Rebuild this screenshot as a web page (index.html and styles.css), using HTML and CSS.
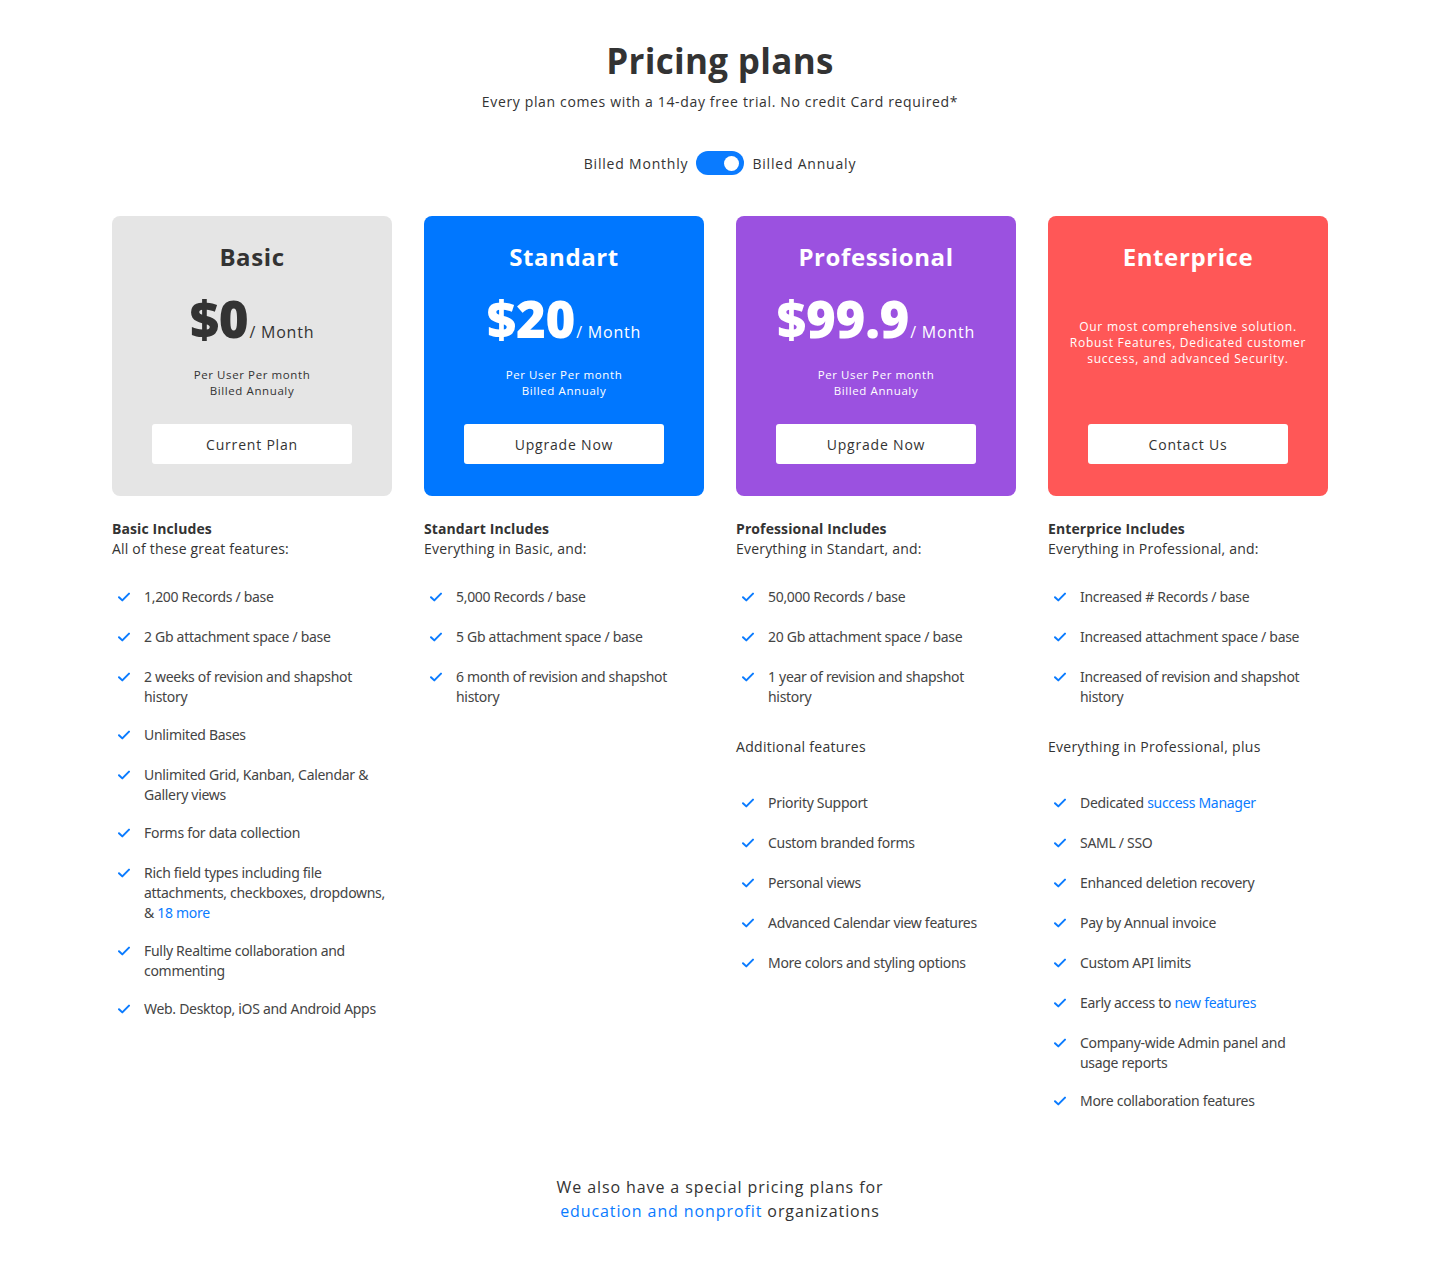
FILE: index.html
```html
<!DOCTYPE html>
<html lang="en">
<head>
<meta charset="utf-8">
<title>Pricing plans</title>
<link rel="stylesheet" href="styles.css">
</head>
<body>
<main class="page">
  <header class="intro">
    <h1 class="title">Pricing plans</h1>
    <p class="subtitle">Every plan comes with a 14-day free trial. No credit Card required*</p>
    <div class="billing">
      <span>Billed Monthly</span>
      <span class="switch"><span class="knob"></span></span>
      <span>Billed Annualy</span>
    </div>
  </header>

  <section class="plans">
    <!-- Basic -->
    <div class="plan">
      <div class="card card-basic">
        <h2 class="card-title">Basic</h2>
        <div class="price"><span class="amount">$0</span><span class="per">/ Month</span></div>
        <p class="note">Per User Per month<br>Billed Annualy</p>
        <button class="btn">Current Plan</button>
      </div>
      <div class="includes">
        <div class="inc-title">Basic Includes</div>
        <div class="inc-sub">All of these great features:</div>
      </div>
      <ul class="features">
        <li><svg class="check" viewBox="0 0 12 10"><path d="M1 5.2 L4.3 8.4 L11 1.6"/></svg><span>1,200 Records / base</span></li>
        <li><svg class="check" viewBox="0 0 12 10"><path d="M1 5.2 L4.3 8.4 L11 1.6"/></svg><span>2 Gb attachment space / base</span></li>
        <li><svg class="check" viewBox="0 0 12 10"><path d="M1 5.2 L4.3 8.4 L11 1.6"/></svg><span>2 weeks of revision and shapshot history</span></li>
        <li><svg class="check" viewBox="0 0 12 10"><path d="M1 5.2 L4.3 8.4 L11 1.6"/></svg><span>Unlimited Bases</span></li>
        <li><svg class="check" viewBox="0 0 12 10"><path d="M1 5.2 L4.3 8.4 L11 1.6"/></svg><span>Unlimited Grid, Kanban, Calendar &amp; Gallery views</span></li>
        <li><svg class="check" viewBox="0 0 12 10"><path d="M1 5.2 L4.3 8.4 L11 1.6"/></svg><span>Forms for data collection</span></li>
        <li><svg class="check" viewBox="0 0 12 10"><path d="M1 5.2 L4.3 8.4 L11 1.6"/></svg><span>Rich field types including file attachments, checkboxes, dropdowns, &amp;&nbsp;<a href="#" class="link">18 more</a></span></li>
        <li><svg class="check" viewBox="0 0 12 10"><path d="M1 5.2 L4.3 8.4 L11 1.6"/></svg><span>Fully Realtime collaboration and commenting</span></li>
        <li><svg class="check" viewBox="0 0 12 10"><path d="M1 5.2 L4.3 8.4 L11 1.6"/></svg><span>Web. Desktop, iOS and Android Apps</span></li>
      </ul>
    </div>

    <!-- Standart -->
    <div class="plan">
      <div class="card card-standart">
        <h2 class="card-title">Standart</h2>
        <div class="price"><span class="amount">$20</span><span class="per">/ Month</span></div>
        <p class="note">Per User Per month<br>Billed Annualy</p>
        <button class="btn">Upgrade Now</button>
      </div>
      <div class="includes">
        <div class="inc-title">Standart Includes</div>
        <div class="inc-sub">Everything in Basic, and:</div>
      </div>
      <ul class="features">
        <li><svg class="check" viewBox="0 0 12 10"><path d="M1 5.2 L4.3 8.4 L11 1.6"/></svg><span>5,000 Records / base</span></li>
        <li><svg class="check" viewBox="0 0 12 10"><path d="M1 5.2 L4.3 8.4 L11 1.6"/></svg><span>5 Gb attachment space / base</span></li>
        <li><svg class="check" viewBox="0 0 12 10"><path d="M1 5.2 L4.3 8.4 L11 1.6"/></svg><span>6 month of revision and shapshot history</span></li>
      </ul>
    </div>

    <!-- Professional -->
    <div class="plan">
      <div class="card card-pro">
        <h2 class="card-title">Professional</h2>
        <div class="price"><span class="amount">$99.9</span><span class="per">/ Month</span></div>
        <p class="note">Per User Per month<br>Billed Annualy</p>
        <button class="btn">Upgrade Now</button>
      </div>
      <div class="includes">
        <div class="inc-title">Professional Includes</div>
        <div class="inc-sub">Everything in Standart, and:</div>
      </div>
      <ul class="features">
        <li><svg class="check" viewBox="0 0 12 10"><path d="M1 5.2 L4.3 8.4 L11 1.6"/></svg><span>50,000 Records / base</span></li>
        <li><svg class="check" viewBox="0 0 12 10"><path d="M1 5.2 L4.3 8.4 L11 1.6"/></svg><span>20 Gb attachment space / base</span></li>
        <li><svg class="check" viewBox="0 0 12 10"><path d="M1 5.2 L4.3 8.4 L11 1.6"/></svg><span>1 year of revision and shapshot history</span></li>
      </ul>
      <div class="extra-title">Additional features</div>
      <ul class="features">
        <li><svg class="check" viewBox="0 0 12 10"><path d="M1 5.2 L4.3 8.4 L11 1.6"/></svg><span>Priority Support</span></li>
        <li><svg class="check" viewBox="0 0 12 10"><path d="M1 5.2 L4.3 8.4 L11 1.6"/></svg><span>Custom branded forms</span></li>
        <li><svg class="check" viewBox="0 0 12 10"><path d="M1 5.2 L4.3 8.4 L11 1.6"/></svg><span>Personal views</span></li>
        <li><svg class="check" viewBox="0 0 12 10"><path d="M1 5.2 L4.3 8.4 L11 1.6"/></svg><span>Advanced Calendar view features</span></li>
        <li><svg class="check" viewBox="0 0 12 10"><path d="M1 5.2 L4.3 8.4 L11 1.6"/></svg><span>More colors and styling options</span></li>
      </ul>
    </div>

    <!-- Enterprice -->
    <div class="plan">
      <div class="card card-enterprise">
        <h2 class="card-title">Enterprice</h2>
        <p class="desc">Our most comprehensive solution.<br>Robust Features, Dedicated customer success, and advanced Security.</p>
        <button class="btn">Contact Us</button>
      </div>
      <div class="includes">
        <div class="inc-title">Enterprice Includes</div>
        <div class="inc-sub">Everything in Professional, and:</div>
      </div>
      <ul class="features">
        <li><svg class="check" viewBox="0 0 12 10"><path d="M1 5.2 L4.3 8.4 L11 1.6"/></svg><span>Increased # Records / base</span></li>
        <li><svg class="check" viewBox="0 0 12 10"><path d="M1 5.2 L4.3 8.4 L11 1.6"/></svg><span>Increased attachment space / base</span></li>
        <li><svg class="check" viewBox="0 0 12 10"><path d="M1 5.2 L4.3 8.4 L11 1.6"/></svg><span>Increased of revision and shapshot history</span></li>
      </ul>
      <div class="extra-title">Everything in Professional, plus</div>
      <ul class="features">
        <li><svg class="check" viewBox="0 0 12 10"><path d="M1 5.2 L4.3 8.4 L11 1.6"/></svg><span>Dedicated <a href="#" class="link">success Manager</a></span></li>
        <li><svg class="check" viewBox="0 0 12 10"><path d="M1 5.2 L4.3 8.4 L11 1.6"/></svg><span>SAML / SSO</span></li>
        <li><svg class="check" viewBox="0 0 12 10"><path d="M1 5.2 L4.3 8.4 L11 1.6"/></svg><span>Enhanced deletion recovery</span></li>
        <li><svg class="check" viewBox="0 0 12 10"><path d="M1 5.2 L4.3 8.4 L11 1.6"/></svg><span>Pay by Annual invoice</span></li>
        <li><svg class="check" viewBox="0 0 12 10"><path d="M1 5.2 L4.3 8.4 L11 1.6"/></svg><span>Custom API limits</span></li>
        <li><svg class="check" viewBox="0 0 12 10"><path d="M1 5.2 L4.3 8.4 L11 1.6"/></svg><span>Early access to <a href="#" class="link">new features</a></span></li>
        <li><svg class="check" viewBox="0 0 12 10"><path d="M1 5.2 L4.3 8.4 L11 1.6"/></svg><span>Company-wide Admin panel and usage reports</span></li>
        <li><svg class="check" viewBox="0 0 12 10"><path d="M1 5.2 L4.3 8.4 L11 1.6"/></svg><span>More collaboration features</span></li>
      </ul>
    </div>
  </section>

  <footer class="footer">
    <p>We also have a special pricing plans for<br><a href="#" class="link">education and nonprofit</a> organizations</p>
  </footer>
</main>
</body>
</html>
```

FILE: styles.css
```css
* { box-sizing: border-box; }

body {
  margin: 0;
  background: #ffffff;
  color: #333333;
  font-family: "Open Sans", "Noto Sans", sans-serif;
}

.page {
  width: 1216px;
  margin: 0 auto;
  padding-top: 38px;
}

.intro {
  display: flex;
  flex-direction: column;
  align-items: center;
}

.title {
  margin: 0;
  font-size: 35px;
  line-height: 46px;
  font-weight: 700;
  color: #333;
  letter-spacing: 0.3px;
}

.subtitle {
  margin: 8px 0 0;
  font-size: 14px;
  line-height: 20px;
  font-weight: 500;
  letter-spacing: 0.65px;
  color: #333;
}

.billing {
  margin-top: 39px;
  display: flex;
  align-items: center;
  gap: 8px;
  font-size: 14px;
  font-weight: 500;
  letter-spacing: 0.8px;
  color: #333;
}

.switch {
  display: flex;
  align-items: center;
  justify-content: flex-end;
  width: 48px;
  height: 24px;
  border-radius: 12px;
  background: #0a7bff;
  padding: 0 5px;
}

.knob {
  width: 15px;
  height: 15px;
  border-radius: 50%;
  background: #fff;
}

.plans {
  margin-top: 41px;
  display: grid;
  grid-template-columns: repeat(4, 280px);
  gap: 32px;
  align-items: start;
}

.plan {
  display: flex;
  flex-direction: column;
}

.card {
  height: 280px;
  border-radius: 8px;
  display: flex;
  flex-direction: column;
  align-items: center;
  padding: 26px 0 32px;
  color: #fff;
}

.card-basic { background: #e5e5e5; color: #333; }
.card-standart { background: #0077ff; }
.card-pro { background: #9b51e0; }
.card-enterprise { background: #ff5757; }

.card-title {
  margin: 0;
  font-size: 24px;
  line-height: 30px;
  font-weight: 700;
  letter-spacing: 0.6px;
}

.price {
  margin-top: 16px;
  display: flex;
  align-items: baseline;
  height: 60px;
}

.amount {
  font-size: 51px;
  line-height: 60px;
  font-weight: 800;
  letter-spacing: -0.3px;
}

.per {
  font-size: 16px;
  font-weight: 400;
  letter-spacing: 0.8px;
  margin-left: 1px;
}

.note {
  margin: 19px 0 0;
  font-size: 11.5px;
  line-height: 16px;
  text-align: center;
  letter-spacing: 0.6px;
}

.desc {
  margin: 47px 0 0;
  max-width: 250px;
  font-size: 12px;
  line-height: 16px;
  text-align: center;
  letter-spacing: 0.75px;
}

.btn {
  margin-top: auto;
  width: 200px;
  height: 40px;
  flex: none;
  border: none;
  border-radius: 3px;
  background: #fff;
  color: #333;
  font-family: inherit;
  font-size: 14px;
  letter-spacing: 0.8px;
  cursor: pointer;
}

.includes {
  margin-top: 23px;
  font-size: 14px;
  line-height: 20px;
  color: #333;
}

.inc-title {
  font-weight: 700;
  letter-spacing: 0.1px;
}

.inc-sub {
  font-weight: 500;
  letter-spacing: 0.2px;
}

.features {
  list-style: none;
  margin: 28px 0 0;
  padding: 0;
  font-family: "Noto Sans", "Roboto", sans-serif;
  font-size: 14px;
  line-height: 20px;
  color: #444;
}

.features li {
  display: flex;
  align-items: flex-start;
  margin-bottom: 18px;
  min-height: 22px;
}

.features li span {
  max-width: 242px;
  letter-spacing: -0.3px;
}

.check {
  flex: none;
  width: 12px;
  height: 10px;
  margin: 5px 14px 0 6px;
  fill: none;
  stroke: #0a7bff;
  stroke-width: 2;
  stroke-linecap: round;
  stroke-linejoin: round;
}

.extra-title {
  margin-top: 12px;
  font-size: 14px;
  line-height: 20px;
  font-weight: 500;
  letter-spacing: 0.3px;
  color: #333;
}

.extra-title + .features {
  margin-top: 36px;
}

.link {
  color: #0a7bff;
  text-decoration: none;
}

.footer {
  margin-top: 44px;
  padding-bottom: 40px;
  text-align: center;
}

.footer p {
  margin: 0;
  font-size: 16px;
  line-height: 24px;
  font-weight: 500;
  letter-spacing: 0.9px;
  color: #333;
}
```
